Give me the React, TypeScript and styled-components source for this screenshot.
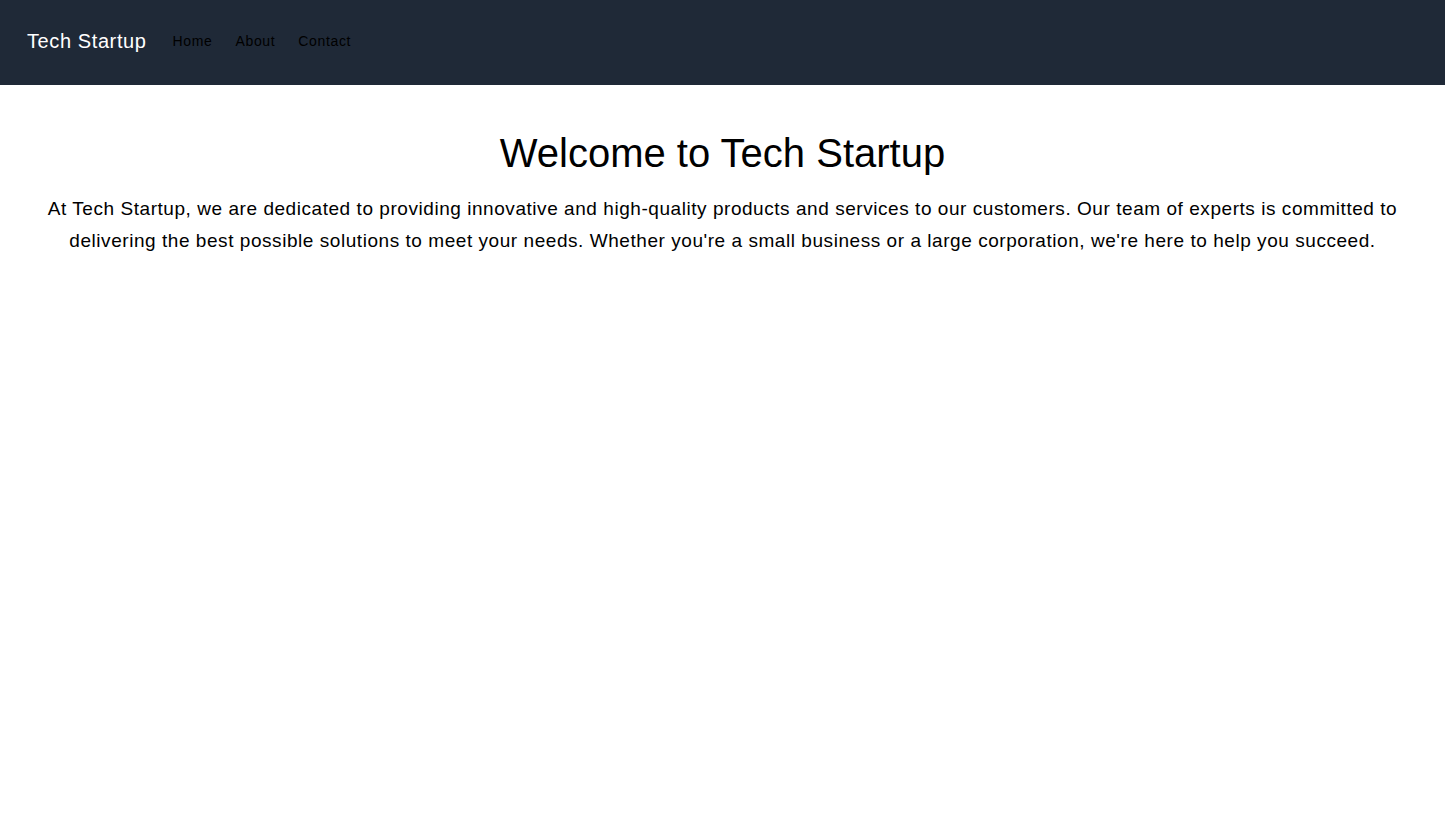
import React from "react";
import styled, { createGlobalStyle } from "styled-components";

const Global = createGlobalStyle`
  * { box-sizing: border-box; }
  body { margin: 0; font-family: "Liberation Sans", Arial, sans-serif; background: #ffffff; color: #000; }
`;

const Nav = styled.nav`
  height: 85px;
  background: #1f2937;
  display: flex;
  align-items: center;
  padding: 0 27px 4px;
  gap: 26px;
`;

const Brand = styled.div`
  color: #ffffff;
  font-size: 20px;
  line-height: 28px;
  letter-spacing: 0.6px;
`;

const Links = styled.ul`
  display: flex;
  gap: 23px;
  list-style: none;
  margin: 0;
  padding: 0;
`;

const Link = styled.a`
  color: #000;
  font-size: 14px;
  line-height: 20px;
  letter-spacing: 0.65px;
  text-decoration: none;
`;

const Main = styled.main`
  padding: 44px 32px;
  text-align: center;
`;

const Title = styled.h1`
  margin: 0 0 16px;
  font-size: 40px;
  line-height: 48px;
  font-weight: 400;
`;

const Text = styled.p`
  margin: 0;
  font-size: 19px;
  line-height: 32px;
  letter-spacing: 0.55px;
`;

export default function App() {
  return (
    <>
      <Global />
      <Nav>
        <Brand>Tech Startup</Brand>
        <Links>
          <li><Link href="#">Home</Link></li>
          <li><Link href="#">About</Link></li>
          <li><Link href="#">Contact</Link></li>
        </Links>
      </Nav>
      <Main>
        <Title>Welcome to Tech Startup</Title>
        <Text>
          At Tech Startup, we are dedicated to providing innovative and high-quality products and services to our customers. Our team of experts is committed to delivering the best possible solutions to meet your needs. Whether you're a small business or a large corporation, we're here to help you succeed.
        </Text>
      </Main>
    </>
  );
}
